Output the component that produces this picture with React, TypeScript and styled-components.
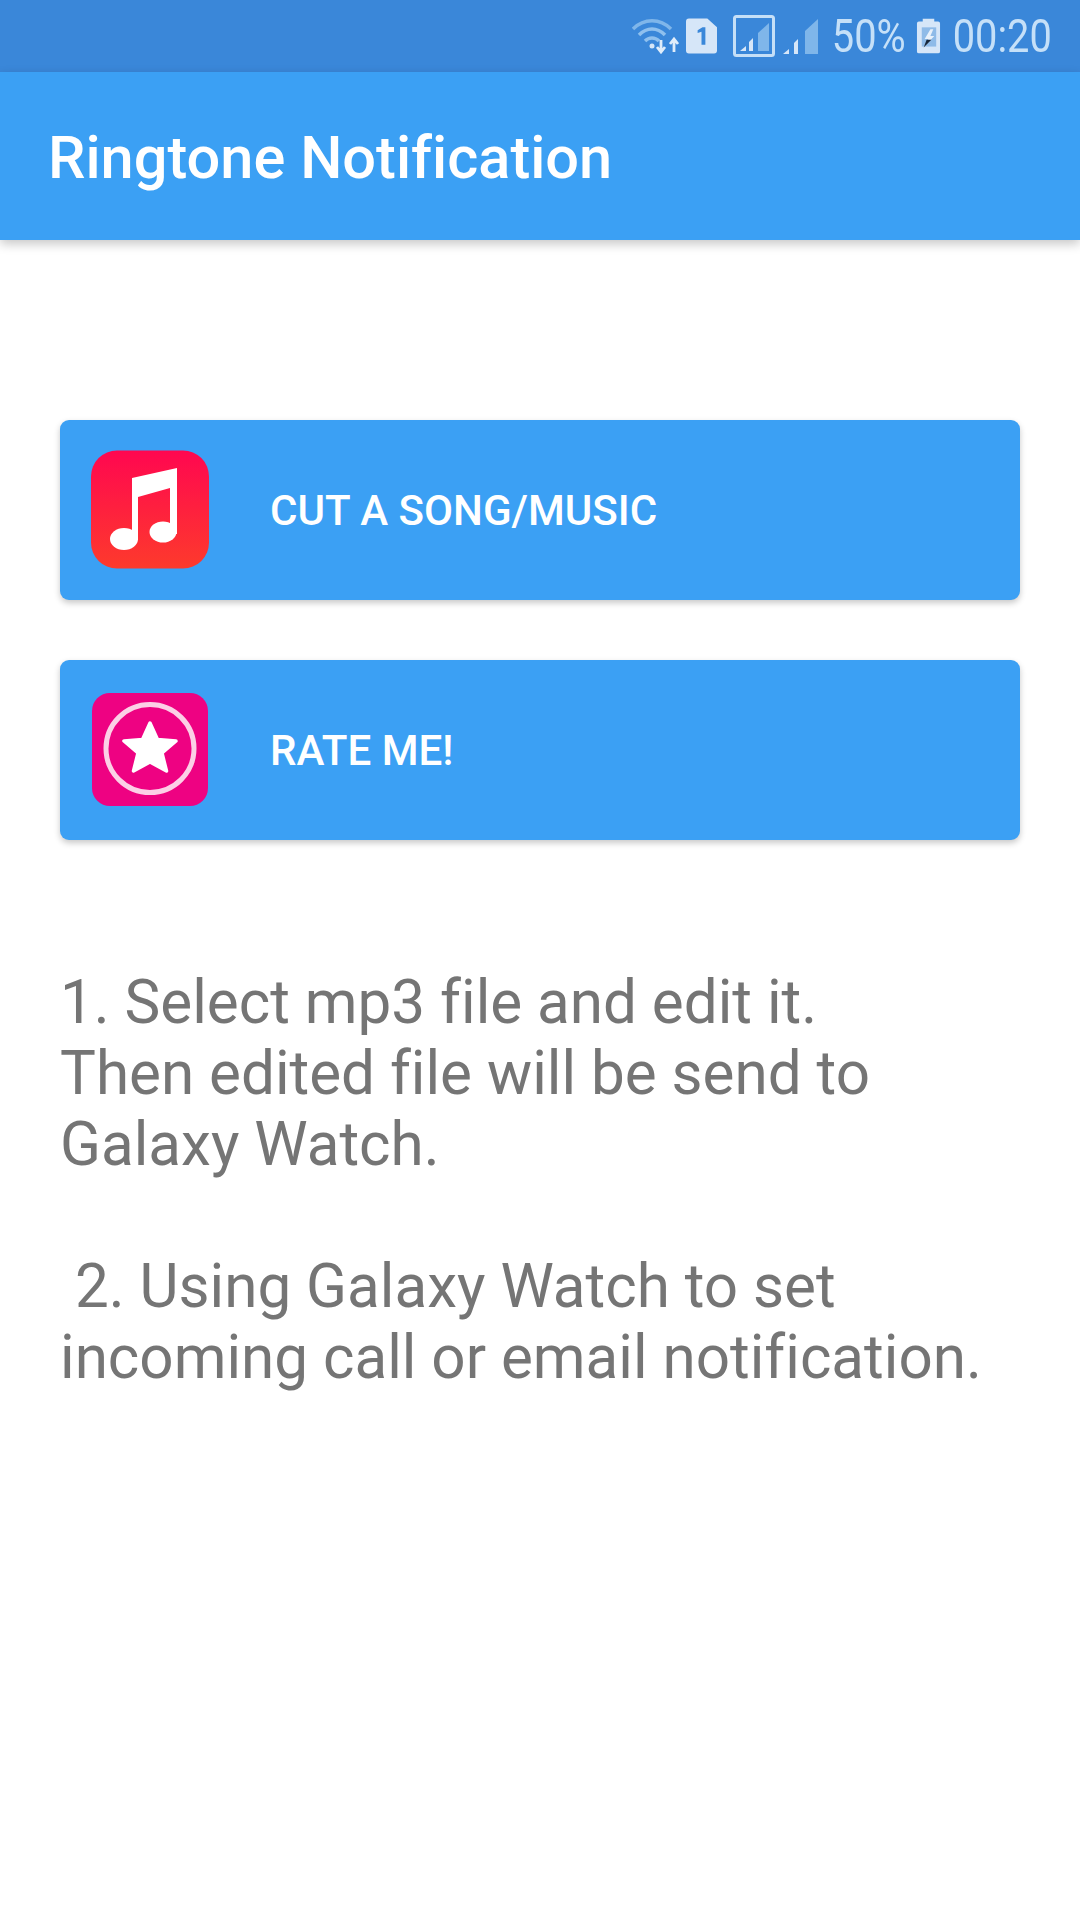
import React from "react";
import styled, { createGlobalStyle } from "styled-components";

const Global = createGlobalStyle`
  html, body { margin: 0; padding: 0; background: #fff; }
  body { font-family: Roboto, "Liberation Sans", sans-serif; font-variant-ligatures: none; }
`;
const Page = styled.div`
  width: 1080px; height: 1920px; display: flex; flex-direction: column; background: #fff; overflow: hidden;
`;
const StatusBar = styled.div`
  height: 72px; flex: none; background: #3a87d9; display: flex; align-items: center; justify-content: flex-end;
  padding-right: 30px; box-sizing: border-box; color: #c5e0f8; font-size: 46px;
`;
const StatusText = styled.span<{ $ml: number; $w: number }>`
  margin-left: ${(p) => p.$ml}px; width: ${(p) => p.$w}px; line-height: 72px; display: flex; justify-content: center;
  white-space: nowrap; flex: none;
`;
const StatusGlyphs = styled.span`
  display: inline-block; transform: scaleX(0.865); transform-origin: center;
`;
const StatusIcon = styled.svg<{ $ml: number }>`
  margin-left: ${(p) => p.$ml}px; flex: none; display: block; filter: blur(0.4px);
`;
const AppBar = styled.header`
  height: 168px; flex: none; background: #3ba0f4; display: flex; align-items: center; padding: 5px 0 0 48px; box-sizing: border-box;
  box-shadow: 0 4px 10px rgba(0,0,0,.22); position: relative;
`;
const Title = styled.h1`
  margin: 0; color: #fff; font-size: 59.5px; font-weight: 500; line-height: 1;
`;
const Content = styled.main`
  display: flex; flex-direction: column; padding: 180px 60px 0;
`;
const ActionButton = styled.div`
  height: 180px; background: #3ba0f4; border-radius: 9px; display: flex; align-items: center;
  padding-left: 30px; margin-bottom: 60px; box-shadow: 0 3px 6px rgba(0,0,0,.22);
`;
const Tile = styled.svg`
  width: 120px; height: 120px; flex: none; display: block; filter: blur(0.7px);
`;
const Label = styled.span`
  margin-left: 60px; padding-top: 2px; color: #fff; font-size: 42.1px; font-weight: 500; line-height: 1;
`;
const Instructions = styled.p`
  margin: 67px 0 0; color: #757575; font-size: 60.16px; line-height: 71px; white-space: pre-wrap;
`;

const star = "M60 33 L67.5 49.5 L86 51 L72 63 L76.5 81 L60 72 L43.5 81 L48 63 L34 51 L52.5 49.5 Z";

export default function App() {
  return (
    <Page>
      <Global />
      <StatusBar>
        <StatusIcon $ml={0} width="48" height="36" viewBox="0 0 48 36" fill="none">
          <path d="M1 11 C12 0 28 0 39 11" stroke="#7fb6ea" strokeWidth="3.5" />
          <path d="M7 17 C15 9 25 9 33 17" stroke="#8fc0ee" strokeWidth="3.5" />
          <path d="M13 23 C17 19 23 19 27 23" stroke="#8fc0ee" strokeWidth="3.5" />
          <circle cx="20" cy="28" r="2.5" fill="#d5e6f8" />
          <path d="M29 22 V34 M25 29 L29 34 L33 29" stroke="#e0edfa" strokeWidth="2.8" />
          <path d="M42 34 V22 M38 26 L42 21 L46 26" stroke="#e0edfa" strokeWidth="2.8" />
        </StatusIcon>
        <StatusIcon $ml={6} width="31" height="36" viewBox="0 0 32 36">
          <path d="M3 0 H22 L32 9 V33 a3 3 0 0 1 -3 3 H3 a3 3 0 0 1 -3 -3 V3 a3 3 0 0 1 3 -3 Z" fill="#d6e6f8" />
          <path d="M12 12 L17 9 H20 V27 H16 V13.5 L12 15 Z" fill="#3a87d9" />
        </StatusIcon>
        <StatusIcon $ml={16} width="42" height="42" viewBox="0 0 42 42" fill="none">
          <rect x="1.5" y="1.5" width="39" height="39" rx="2" stroke="#c5dff7" strokeWidth="3" />
          <path d="M7 36 L13 31 V36 Z" fill="#d6e6f8" />
          <path d="M16 27 L20 23 V36 H16 Z" fill="#d6e6f8" />
          <path d="M25 18 L36 8 V36 H25 Z" fill="#7fb6ea" />
        </StatusIcon>
        <StatusIcon $ml={7} width="36" height="38" viewBox="0 0 36 38">
          <path d="M1 37 L7 32 V37 Z" fill="#d6e6f8" />
          <path d="M12 26 L16 22 V37 H12 Z" fill="#d6e6f8" />
          <path d="M23 14 L36 2 V37 H23 Z" fill="#7fb6ea" />
        </StatusIcon>
        <StatusText $ml={17} $w={68}><StatusGlyphs>50%</StatusGlyphs></StatusText>
        <StatusIcon $ml={13} width="25" height="36" viewBox="0 0 26 36">
          <path d="M7 0 H19 V3 H23 a2 2 0 0 1 2 2 V34 a2 2 0 0 1 -2 2 H3 a2 2 0 0 1 -2 -2 V5 a2 2 0 0 1 2 -2 H7 Z" fill="#d6e6f8" />
          <rect x="6" y="9" width="15" height="20" fill="#8fbbe8" />
          <path d="M15 11 L9 21 H13 L8 30 L19 18 H15 L18 11 Z" fill="#e8f1fb" />
          <path d="M11 22 L8 30 L16 22 Z" fill="#17263a" />
        </StatusIcon>
        <StatusText $ml={13} $w={96}><StatusGlyphs>00:20</StatusGlyphs></StatusText>
      </StatusBar>
      <AppBar>
        <Title>Ringtone Notification</Title>
      </AppBar>
      <Content>
        <ActionButton>
          <Tile viewBox="0 0 120 120">
            <defs>
              <linearGradient id="music" x1="0" y1="0" x2="0" y2="1">
                <stop offset="0" stopColor="#ff0750" />
                <stop offset="1" stopColor="#fd3a2c" />
              </linearGradient>
            </defs>
            <rect width="118" height="118" x="1" y="0.5" rx="26" fill="url(#music)" />
            <path d="M42 28 L87 18 V84 H80 V38 L48 47 V90 H42 Z" fill="#fff" />
            <ellipse cx="73" cy="82" rx="13.5" ry="10.5" fill="#fff" />
            <ellipse cx="34" cy="89" rx="14" ry="11" fill="#fff" />
          </Tile>
          <Label>CUT A SONG/MUSIC</Label>
        </ActionButton>
        <ActionButton>
          <Tile viewBox="0 0 120 120">
            <rect x="2" y="3" width="116" height="113" rx="18" fill="#ee0282" />
            <circle cx="60" cy="58.5" r="44" fill="none" stroke="#fcd0e6" strokeWidth="5" />
            <path d={star} fill="#fff" stroke="#fff" strokeWidth="3.5" strokeLinejoin="round" />
          </Tile>
          <Label>RATE ME!</Label>
        </ActionButton>
        <Instructions>{"1. Select mp3 file and edit it.\nThen edited file will be send to\nGalaxy Watch.\n\n 2. Using Galaxy Watch to set\nincoming call or email notification."}</Instructions>
      </Content>
    </Page>
  );
}
